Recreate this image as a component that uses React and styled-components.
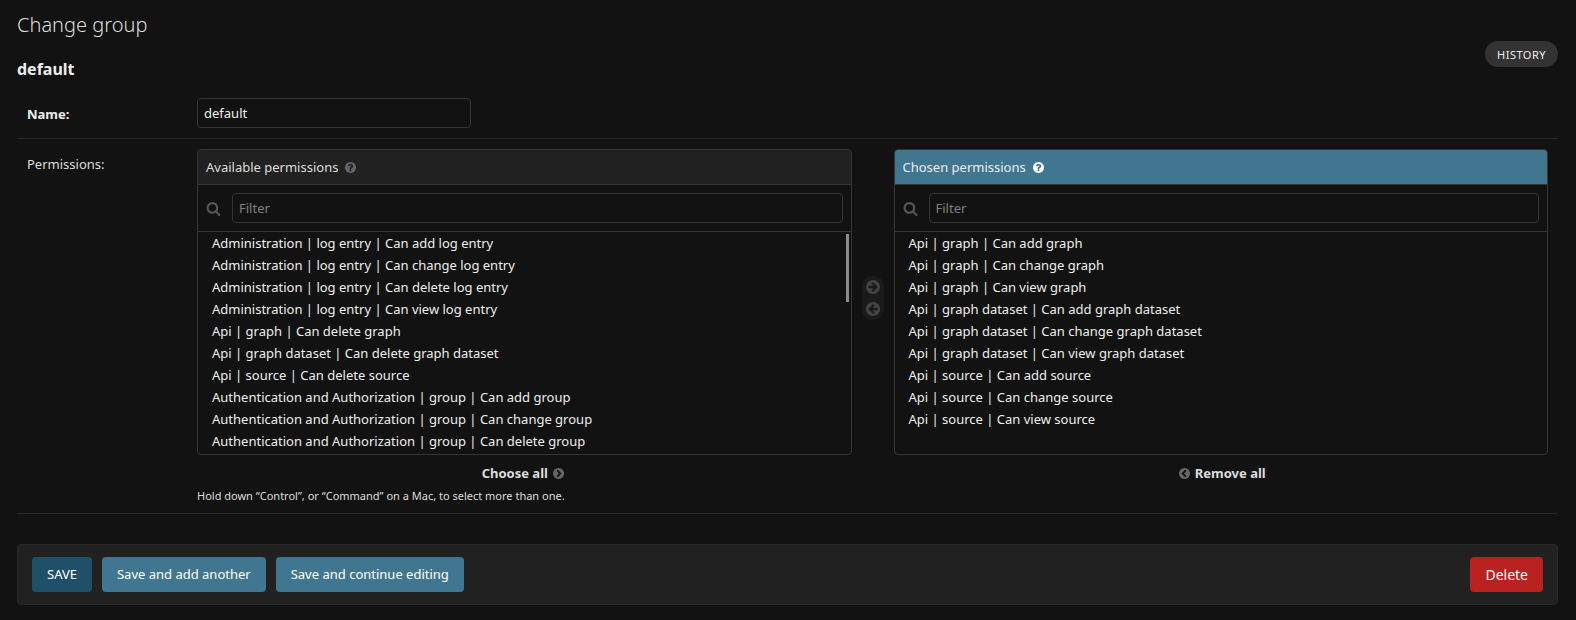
import React from 'react';
import styled, { createGlobalStyle } from 'styled-components';

const GlobalStyle = createGlobalStyle`
  *, *::before, *::after { box-sizing: border-box; }
  body {
    margin: 0;
    background: #121212;
    color: #eeeeee;
    font: 13px/20px "Noto Sans", sans-serif;
  }
  input, button { font: inherit; }
`;

const Page = styled.main`
  height: 620px;
  padding: 14px 18px 0 17px;
  overflow: hidden;
`;

const Title = styled.h1`
  margin: 0;
  font-size: 20px;
  font-weight: 300;
  line-height: 22px;
  color: #dddddd;
`;

const SubHeader = styled.div`
  display: flex;
  justify-content: space-between;
  align-items: flex-start;
  height: 52px;
  padding-top: 5px;
`;

const ObjectName = styled.h2`
  margin: 18px 0 0;
  font-size: 16px;
  font-weight: 700;
  line-height: 20px;
`;

const HistoryLink = styled.a`
  height: 26px;
  padding: 1px 12px 0;
  border-radius: 15px;
  background: #333333;
  font-size: 11px;
  line-height: 26px;
  letter-spacing: 0.5px;
  text-transform: uppercase;
`;

const FormRow = styled.div`
  display: flex;
  height: ${(p) => p.$height}px;
  padding: 10px;
  border-bottom: 1px solid #282828;
`;

const Label = styled.label`
  flex: none;
  width: 170px;
  padding-top: ${(p) => p.$top}px;
  font-weight: ${(p) => (p.$required ? 700 : 400)};
  color: ${(p) => (p.$required ? '#eeeeee' : '#dddddd')};
`;

const TextInput = styled.input`
  flex: ${(p) => (p.$width ? 'none' : '1')};
  width: ${(p) => (p.$width ? `${p.$width}px` : 'auto')};
  min-width: 0;
  height: 30px;
  padding: 5px 6px;
  border: 1px solid #353535;
  border-radius: 4px;
  outline: none;
  background: #121212;
  color: #eeeeee;
  &::placeholder { color: #808080; opacity: 1; }
`;

const Field = styled.div`
  flex: 1;
  min-width: 0;
`;

const Selector = styled.div`
  display: flex;
`;

const Column = styled.div`
  flex: 1 1 0;
  min-width: 0;
`;

const Box = styled.section`
  height: 306px;
  border: 1px solid #353535;
  border-radius: 4px;
  overflow: hidden;
`;

const BoxHeader = styled.h3`
  display: flex;
  align-items: center;
  gap: 7px;
  height: 35px;
  margin: 0;
  padding: 0 8px;
  border-bottom: 1px solid #353535;
  background: ${(p) => (p.$chosen ? '#417690' : '#212121')};
  color: ${(p) => (p.$chosen ? '#eeeeee' : '#dddddd')};
  font-size: 13px;
  font-weight: 400;
`;

const FilterBar = styled.div`
  display: flex;
  align-items: center;
  gap: 11px;
  height: 47px;
  padding: 0 8px;
  border-bottom: 1px solid #353535;
`;

const OptionArea = styled.div`
  display: flex;
  justify-content: space-between;
  height: 222px;
  padding: 0 2px 0 4px;
`;

const OptionList = styled.ul`
  margin: 0;
  padding: 0;
  list-style: none;
`;

const Option = styled.li`
  height: 22px;
  padding-left: 10px;
  line-height: 22px;
  white-space: nowrap;
`;

const ScrollThumb = styled.div`
  width: 3px;
  height: 68px;
  margin-top: 2px;
  background: #8b8b8b;
`;

const Mover = styled.div`
  display: flex;
  flex: none;
  flex-direction: column;
  align-items: center;
  gap: 8px;
  width: 22px;
  height: 44px;
  margin: 127px 10px 0;
  padding-top: 4px;
  border-radius: 10px;
  background: #1a1a1a;
`;

const BulkAction = styled.a`
  display: flex;
  align-items: center;
  justify-content: center;
  gap: 5px;
  height: 18px;
  margin-top: 9px;
  padding: ${(p) => (p.$side === 'left' ? '0 0 0 3px' : '0 3px 0 0')};
  font-weight: 700;
  color: #dddddd;

  svg { margin-top: 1px; }
`;

const HelpText = styled.p`
  margin: 6px 0 0;
  font-size: 11px;
  line-height: 16px;
  color: #dddddd;
`;

const SubmitRow = styled.footer`
  display: flex;
  align-items: center;
  gap: 10px;
  height: 61px;
  margin-top: 30px;
  padding: 0 14px;
  border: 1px solid #282828;
  border-radius: 4px;
  background: #212121;
`;

const BUTTON_COLORS = { primary: '#205067', normal: '#417690', danger: '#ba2121' };

const Button = styled.button`
  height: 35px;
  margin-left: ${(p) => (p.$kind === 'danger' ? 'auto' : '0')};
  padding: ${(p) => (p.$kind === 'danger' ? '0 15px' : '0 15px 2px')};
  border: none;
  border-radius: 4px;
  background: ${(p) => BUTTON_COLORS[p.$kind]};
  color: #ffffff;
  font-size: ${(p) => (p.$kind === 'danger' ? 14 : 13)}px;
  text-transform: ${(p) => (p.$kind === 'primary' ? 'uppercase' : 'none')};
  white-space: nowrap;
`;

const IconSvg = styled.svg`
  flex: none;
  width: ${(p) => p.$size}px;
  height: ${(p) => p.$size}px;
  fill: ${(p) => p.$color};
  transform: ${(p) => (p.$flip ? 'scaleX(-1)' : 'none')};
`;

const DISC =
  'M1664 896q0 209-103 385.5t-279.5 279.5-385.5 103-385.5-103-279.5-279.5-103-385.5 103-385.5 279.5-279.5 385.5-103 385.5 103 279.5 279.5 103 385.5z';

const PATHS = {
  search:
    'M1216 832q0-185-131.5-316.5t-316.5-131.5-316.5 131.5-131.5 316.5 131.5 316.5 316.5 131.5 316.5-131.5 131.5-316.5zm512 832q0 52-38 90t-90 38q-54 0-90-38l-343-342q-179 124-399 124-143 0-273.5-55.5t-225-150-150-225-55.5-273.5 55.5-273.5 150-225 225-150 273.5-55.5 273.5 55.5 225 150 150 225 55.5 273.5q0 220-124 399l343 343q37 37 37 90z',
  help:
    'M1024 1376v-192q0-14-9-23t-23-9h-192q-14 0-23 9t-9 23v192q0 14 9 23t23 9h192q14 0 23-9t9-23zm256-672q0-88-55.5-163t-138.5-116-170-41q-243 0-371 213-15 24 8 42l132 100q7 6 19 6 16 0 25-12 53-68 86-92 34-24 86-24 48 0 85.5 26t37.5 59q0 38-20 61t-68 45q-63 28-115.5 86.5t-52.5 125.5v36q0 14 9 23t23 9h192q14 0 23-9t9-23q0-19 21.5-49.5t54.5-49.5q32-18 49-28.5t46-35 44.5-48 28-60.5 12.5-81z' + DISC,
  arrow:
    'M1413 896q0-27-18-45l-91-91-362-362q-18-18-45-18t-45 18l-91 91q-18 18-18 45t18 45l189 189h-502q-26 0-45 19t-19 45v128q0 26 19 45t45 19h502l-189 189q-19 19-19 45t19 45l91 91q18 18 45 18t45-18l362-362 91-91q18-18 18-45z' + DISC,
  chevron:
    'M845 1395l454-454q19-19 19-45t-19-45l-454-454q-19-19-45-19t-45 19l-102 102q-19 19-19 45t19 45l307 307-307 307q-19 19-19 45t19 45l102 102q19 19 45 19t45-19z' + DISC,
};

function Icon({ name, size, color, flip }) {
  const viewBox = name === 'search' ? '0 0 1792 1792' : '128 128 1536 1536';
  return (
    <IconSvg viewBox={viewBox} $size={size} $color={color} $flip={flip} aria-hidden="true">
      <path fillRule="evenodd" d={PATHS[name]} />
    </IconSvg>
  );
}

const AVAILABLE = [
  'Administration | log entry | Can add log entry',
  'Administration | log entry | Can change log entry',
  'Administration | log entry | Can delete log entry',
  'Administration | log entry | Can view log entry',
  'Api | graph | Can delete graph',
  'Api | graph dataset | Can delete graph dataset',
  'Api | source | Can delete source',
  'Authentication and Authorization | group | Can add group',
  'Authentication and Authorization | group | Can change group',
  'Authentication and Authorization | group | Can delete group',
];

const CHOSEN = [
  'Api | graph | Can add graph',
  'Api | graph | Can change graph',
  'Api | graph | Can view graph',
  'Api | graph dataset | Can add graph dataset',
  'Api | graph dataset | Can change graph dataset',
  'Api | graph dataset | Can view graph dataset',
  'Api | source | Can add source',
  'Api | source | Can change source',
  'Api | source | Can view source',
];

function PermissionBox({ title, options, chosen, scrollable }) {
  return (
    <Box>
      <BoxHeader $chosen={chosen}>
        {title}
        <Icon name="help" size={11} color={chosen ? '#ffffff' : '#666666'} />
      </BoxHeader>
      <FilterBar>
        <Icon name="search" size={15} color="#555555" />
        <TextInput placeholder="Filter" />
      </FilterBar>
      <OptionArea>
        <OptionList>
          {options.map((o) => (
            <Option key={o}>{o}</Option>
          ))}
        </OptionList>
        {scrollable && <ScrollThumb />}
      </OptionArea>
    </Box>
  );
}

export default function App() {
  return (
    <Page>
      <GlobalStyle />
      <Title>Change group</Title>
      <SubHeader>
        <ObjectName>default</ObjectName>
        <HistoryLink>History</HistoryLink>
      </SubHeader>
      <FormRow $height={51}>
        <Label $required $top={6}>Name:</Label>
        <TextInput $width={274} defaultValue="default" />
      </FormRow>
      <FormRow $height={375}>
        <Label $top={5}>Permissions:</Label>
        <Field>
          <Selector>
            <Column>
              <PermissionBox title="Available permissions" options={AVAILABLE} scrollable />
              <BulkAction $side="right">
                Choose all
                <Icon name="chevron" size={11} color="#666666" />
              </BulkAction>
            </Column>
            <Mover>
              <Icon name="arrow" size={14} color="#444444" />
              <Icon name="arrow" size={14} color="#444444" flip />
            </Mover>
            <Column>
              <PermissionBox title="Chosen permissions" options={CHOSEN} chosen />
              <BulkAction $side="left">
                <Icon name="chevron" size={11} color="#666666" flip />
                Remove all
              </BulkAction>
            </Column>
          </Selector>
          <HelpText>Hold down “Control”, or “Command” on a Mac, to select more than one.</HelpText>
        </Field>
      </FormRow>
      <SubmitRow>
        <Button $kind="primary">Save</Button>
        <Button $kind="normal">Save and add another</Button>
        <Button $kind="normal">Save and continue editing</Button>
        <Button $kind="danger">Delete</Button>
      </SubmitRow>
    </Page>
  );
}
